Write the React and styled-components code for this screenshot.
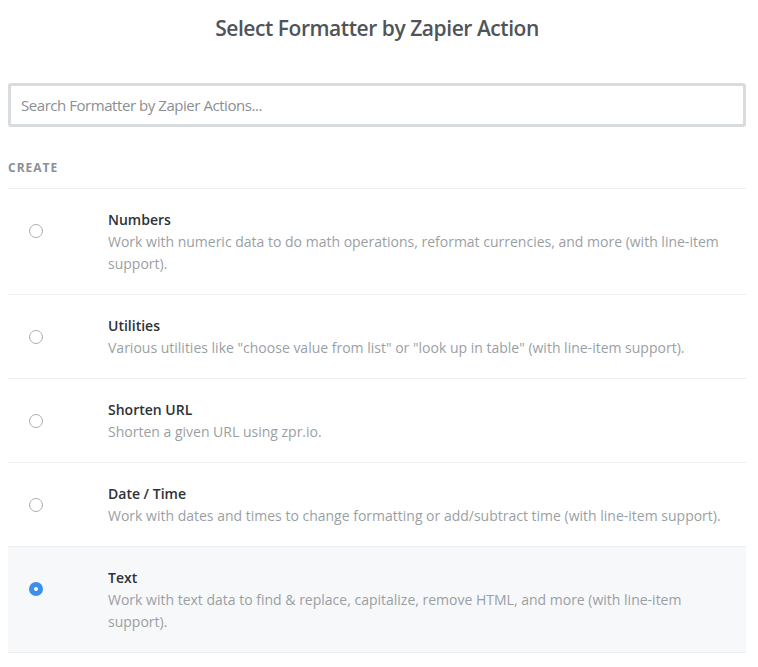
import styled, { createGlobalStyle } from 'styled-components'

const GlobalStyle = createGlobalStyle`
  body {
    margin: 0;
    background: #ffffff;
    font-family: "Open Sans", "Liberation Sans", sans-serif;
  }
`

const actions = [
  {
    title: 'Numbers',
    description:
      'Work with numeric data to do math operations, reformat currencies, and more (with line-item support).',
  },
  {
    title: 'Utilities',
    description:
      'Various utilities like "choose value from list" or "look up in table" (with line-item support).',
  },
  {
    title: 'Shorten URL',
    description: 'Shorten a given URL using zpr.io.',
  },
  {
    title: 'Date / Time',
    description:
      'Work with dates and times to change formatting or add/subtract time (with line-item support).',
  },
  {
    title: 'Text',
    description:
      'Work with text data to find & replace, capitalize, remove HTML, and more (with line-item support).',
    selected: true,
  },
]

export default function App() {
  return (
    <>
      <GlobalStyle />
      <Page>
        <Title>Select Formatter by Zapier Action</Title>
        <SearchInput placeholder="Search Formatter by Zapier Actions..." />
        <SectionLabel>Create</SectionLabel>
        <List>
          {actions.map((action) => (
            <Row key={action.title} selected={action.selected}>
              <RadioCell>
                <Radio selected={action.selected} />
              </RadioCell>
              <RowText>
                <RowTitle>{action.title}</RowTitle>
                <RowDescription>{action.description}</RowDescription>
              </RowText>
            </Row>
          ))}
        </List>
      </Page>
    </>
  )
}

const Page = styled.div`
  width: 738px;
  margin-left: 8px;
`

const Title = styled.h1`
  margin: 0;
  padding-top: 14px;
  height: 83px;
  box-sizing: border-box;
  text-align: center;
  font-size: 21px;
  font-weight: 600;
  letter-spacing: -0.45px;
  line-height: 28px;
  color: #505458;
`

const SearchInput = styled.input`
  display: block;
  width: 100%;
  height: 44px;
  box-sizing: border-box;
  padding: 0 10px;
  border: 3px solid #d9dcdf;
  border-radius: 3px;
  outline: none;
  font-family: "Open Sans", "Liberation Sans", sans-serif;
  font-size: 15px;
  letter-spacing: -0.45px;
  color: #505458;

  &::placeholder {
    color: #8a8f94;
  }
`

const SectionLabel = styled.div`
  margin-top: 32px;
  height: 29px;
  font-size: 12px;
  font-weight: 700;
  letter-spacing: 1px;
  text-transform: uppercase;
  line-height: 18px;
  color: #8b9095;
`

const List = styled.div`
  border-top: 1px solid #eceef0;
`

const Row = styled.div`
  display: flex;
  align-items: flex-start;
  padding: 20px 20px 19px 0;
  border-bottom: 1px solid #eceef0;
  background: ${({ selected }) => (selected ? '#f7f8fa' : '#ffffff')};
`

const RadioCell = styled.div`
  flex: 0 0 100px;
  display: flex;
  padding: 15px 0 0 21px;
  box-sizing: border-box;
`

const Radio = styled.span`
  width: 14px;
  height: 14px;
  box-sizing: border-box;
  border-radius: 50%;
  border: ${({ selected }) => (selected ? '5px solid #3d8fef' : '1px solid #a9adb1')};
  background: #ffffff;
`

const RowText = styled.div`
  flex: 1;
  min-width: 0;
`

const RowTitle = styled.div`
  font-size: 14px;
  font-weight: 600;
  line-height: 22px;
  color: #2e3236;
`

const RowDescription = styled.div`
  font-size: 14px;
  line-height: 22px;
  color: #9a9fa4;
`
